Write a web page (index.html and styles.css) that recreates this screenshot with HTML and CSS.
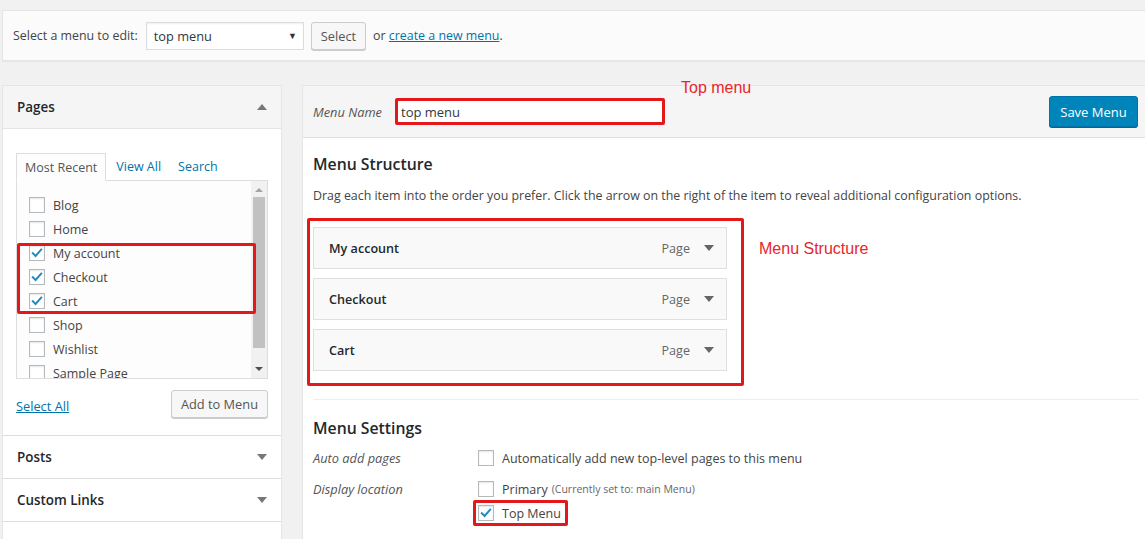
FILE: index.html
```html
<!DOCTYPE html>
<html>
<head>
<meta charset="utf-8">
<link rel="stylesheet" href="styles.css">
</head>
<body>
<div class="wrap">
  <div class="manage-bar">
    <span class="lbl">Select a menu to edit:</span>
    <div class="select"><span>top menu</span><span class="sel-arrow">▼</span></div>
    <button class="btn">Select</button>
    <span class="or">or <a href="#">create a new menu</a>.</span>
  </div>

  <div class="columns">
    <div class="left">
      <div class="acc-head open"><span>Pages</span><span class="tri up"></span></div>
      <div class="acc-body">
        <div class="tabs">
          <span class="tab active">Most Recent</span>
          <span class="tab link">View All</span>
          <span class="tab link">Search</span>
        </div>
        <div class="panel">
          <ul class="checklist">
            <li><span class="cb"></span>Blog</li>
            <li><span class="cb"></span>Home</li>
            <li><span class="cb checked"><svg viewBox="0 0 16 16"><path d="M3.2 8.2 L6.4 11.4 L12.8 4.2" /></svg></span>My account</li>
            <li><span class="cb checked"><svg viewBox="0 0 16 16"><path d="M3.2 8.2 L6.4 11.4 L12.8 4.2" /></svg></span>Checkout</li>
            <li><span class="cb checked"><svg viewBox="0 0 16 16"><path d="M3.2 8.2 L6.4 11.4 L12.8 4.2" /></svg></span>Cart</li>
            <li><span class="cb"></span>Shop</li>
            <li><span class="cb"></span>Wishlist</li>
            <li class="last"><span class="cb"></span>Sample Page</li>
          </ul>
          <div class="scrollbar">
            <span class="sb-up"></span>
            <span class="sb-thumb"></span>
            <span class="sb-down"></span>
          </div>
          <div class="redbox rb-pages"></div>
        </div>
        <div class="acc-actions">
          <a href="#" class="selall">Select All</a>
          <button class="btn">Add to Menu</button>
        </div>
      </div>
      <div class="acc-head"><span>Posts</span><span class="tri down"></span></div>
      <div class="acc-head"><span>Custom Links</span><span class="tri down"></span></div>
      <div class="acc-rest"></div>
    </div>

    <div class="right">
      <div class="menu-head">
        <label class="mname">Menu Name</label>
        <div class="name-input">top menu</div>
        <span class="note note-top">Top menu</span>
        <button class="btn-primary">Save Menu</button>
      </div>
      <div class="menu-body">
        <h3>Menu Structure</h3>
        <p class="desc">Drag each item into the order you prefer. Click the arrow on the right of the item to reveal additional configuration options.</p>
        <div class="struct-wrap">
          <div class="struct">
            <div class="item"><span class="ititle">My account</span><span class="itype">Page</span><span class="tri down dark"></span></div>
            <div class="item"><span class="ititle">Checkout</span><span class="itype">Page</span><span class="tri down dark"></span></div>
            <div class="item"><span class="ititle">Cart</span><span class="itype">Page</span><span class="tri down dark"></span></div>
          </div>
          <span class="note note-struct">Menu Structure</span>
        </div>
        <div class="settings">
          <h3>Menu Settings</h3>
          <div class="srow">
            <span class="slabel">Auto add pages</span>
            <div class="sopts">
              <div class="opt"><span class="cb"></span>Automatically add new top-level pages to this menu</div>
            </div>
          </div>
          <div class="srow">
            <span class="slabel">Display location</span>
            <div class="sopts">
              <div class="opt"><span class="cb"></span>Primary <small>(Currently set to: main Menu)</small></div>
              <div class="opt boxed"><span class="cb checked"><svg viewBox="0 0 16 16"><path d="M3.2 8.2 L6.4 11.4 L12.8 4.2" /></svg></span>Top Menu</div>
            </div>
          </div>
        </div>
      </div>
    </div>
  </div>
</div>
</body>
</html>
```

FILE: styles.css
```css
* { box-sizing: border-box; }
html, body { margin: 0; padding: 0; }
body {
  background: #f1f1f1;
  font-family: "Open Sans", "Noto Sans", sans-serif;
  font-size: 12.4px;
  color: #444;
  overflow: hidden;
  width: 1145px;
  height: 539px;
}
a { color: #0073aa; text-decoration: underline; }
.wrap { padding: 10px 0 0 2px; width: 1180px; }

.manage-bar {
  height: 51px;
  background: #fbfbfb;
  border: 1px solid #e5e5e5;
  display: flex;
  align-items: center;
  padding: 0 0 0 10px;
  box-shadow: 0 1px 1px rgba(0,0,0,0.04);
}
.lbl { margin-right: 8px; }
.select {
  width: 158px; height: 28px;
  border: 1px solid #ddd; background: #fff;
  display: flex; align-items: center; justify-content: space-between;
  padding: 0 6px 0 7px;
  color: #32373c; font-size: 12.8px;
  box-shadow: inset 0 1px 2px rgba(0,0,0,0.07);
}
.sel-arrow { font-size: 9px; color: #333; }
.btn {
  height: 28px; padding: 0 9px;
  border: 1px solid #ccc; border-radius: 3px;
  background: #f7f7f7; color: #555;
  font-family: inherit; font-size: 12.8px;
  box-shadow: 0 1px 0 #ccc;
  margin-left: 7px;
}
.or { margin-left: 7px; }

.columns { display: flex; margin-top: 24px; align-items: flex-start; gap: 20px; }
.left {
  width: 280px; flex: none;
  border: 1px solid #e5e5e5; border-bottom: none;
  background: #fff;
}
.acc-head {
  height: 43px;
  display: flex; align-items: center; justify-content: space-between;
  padding: 0 14px 0 14px;
  font-size: 13.4px; font-weight: 600; color: #23282d;
  border-bottom: 1px solid #ddd;
  background: #fff;
}
.acc-head.open { background: #f5f5f5; height: 43px; border-bottom-color: #e5e5e5; }
.tri { width: 0; height: 0; border-left: 5px solid transparent; border-right: 5px solid transparent; }
.tri.up { border-bottom: 6px solid #777; }
.tri.down { border-top: 6px solid #777; }
.tri.dark { border-top-color: #666; }

.acc-body { padding: 24px 13px 17px 13px; border-bottom: 1px solid #ddd; }
.tabs { display: flex; align-items: flex-end; height: 27px; position: relative; z-index: 1; }
.tab { font-size: 12.5px; height: 27px; display: flex; align-items: center; padding: 0 8px; }
.tab.active { border: 1px solid #ddd; border-bottom-color: #fdfdfd; background: #fdfdfd; color: #555; height: 28px; margin-bottom: -1px; padding: 0 8px; }
.tab.link { color: #0073aa; padding: 0 0 0 10px; margin-right: 7px; }
.panel {
  position: relative;
  height: 199px;
  border: 1px solid #ddd; background: #fdfdfd;
  overflow: hidden;
}
.checklist { list-style: none; margin: 0; padding: 12px 0 0 12px; }
.checklist li { height: 24px; display: flex; align-items: center; font-size: 12.5px; color: #444; }
.checklist li.last { align-items: flex-start; padding-top: 4px; height: 18px; overflow: hidden; }
.cb {
  width: 16px; height: 16px; flex: none;
  border: 1px solid #b4b9be; background: #fff;
  box-shadow: inset 0 1px 2px rgba(0,0,0,0.1);
  margin-right: 8px;
  display: inline-flex; align-items: center; justify-content: center;
}
.cb svg { width: 16px; height: 16px; }
.cb svg path { fill: none; stroke: #1e8cbe; stroke-width: 2.2; stroke-linecap: square; }
.scrollbar {
  position: absolute; right: 0; top: 0; bottom: 0; width: 16px;
  background: #f1f1f1;
  display: flex; flex-direction: column; align-items: center;
}
.sb-up { margin-top: 7px; width: 0; height: 0; border-left: 4px solid transparent; border-right: 4px solid transparent; border-bottom: 4px solid #a3a3a3; }
.sb-thumb { margin-top: 5px; width: 12px; height: 151px; background: #c1c1c1; }
.sb-down { margin-top: 19px; width: 0; height: 0; border-left: 4px solid transparent; border-right: 4px solid transparent; border-top: 4px solid #505050; }
.redbox { position: absolute; border: 3px solid #e2181b; border-radius: 2px; }
.rb-pages { left: 0; top: 62px; width: 239px; height: 71px; }

.acc-actions { display: flex; justify-content: space-between; align-items: center; margin-top: 11px; }
.selall { font-size: 12.8px; margin-top: 4px; }
.acc-actions .btn { height: 28px; padding: 0 9px; }
.acc-rest { height: 30px; }

.right { flex: 1; border: 1px solid #e5e5e5; background: #fff; height: 480px; }
.menu-head {
  height: 52px; background: #f5f5f5; border-bottom: 1px solid #dfdfdf;
  display: flex; align-items: center; padding: 0 0 0 10px; position: relative;
}
.mname { font-style: italic; color: #555; font-size: 12.8px; width: 82px; }
.name-input {
  width: 270px; height: 27px; border: 3px solid #e2181b; border-radius: 2px;
  background: #fff; font-size: 13px; color: #32373c; padding: 0 3px; display: flex; align-items: center;
}
.note { font-family: "Liberation Sans", Arial, sans-serif; color: #e8262b; font-size: 16px; }
.note-top { position: absolute; left: 378px; top: -7px; }
.btn-primary {
  margin-left: auto; margin-right: 41px;
  height: 31px; width: 89px;
  background: #0085ba; border: 1px solid #0073aa; border-radius: 3px;
  box-shadow: 0 1px 0 #006799;
  color: #fff; font-family: inherit; font-size: 13px;
}
.menu-body { padding: 0 0 0 10px; }
h3 { margin: 0; font-size: 15.8px; font-weight: 600; color: #23282d; }
.menu-body > h3 { padding-top: 15px; height: 43px; }
.desc { margin: 0; height: 37px; padding-top: 6px; }
.struct-wrap { position: relative; height: 182px; border-bottom: 1px solid #eee; margin-right: 40px; }
.struct {
  position: absolute; left: -6px; top: 0; width: 437px; height: 168px;
  border: 3px solid #e2181b; border-radius: 2px;
  padding: 6px 0 0 3px;
}
.item {
  width: 414px; height: 42px; border: 1px solid #dfdfdf; background: #f9f9f9;
  display: flex; align-items: center; padding: 0 12px 0 15px; margin-bottom: 9px;
}
.ititle { font-size: 12.6px; font-weight: 600; color: #23282d; flex: 1; }
.itype { color: #666; font-size: 12.6px; margin-right: 14px; }
.note-struct { position: absolute; left: 446px; top: 22px; }
.settings h3 { padding-top: 17px; height: 46px; }
.srow { display: flex; }
.slabel { width: 165px; font-style: italic; color: #555; font-size: 12.8px; line-height: 24px; }
.sopts { display: flex; flex-direction: column; }
.opt { display: flex; align-items: center; height: 24px; font-size: 12.5px; }
.srow + .srow { margin-top: 7px; }
.opt .cb { margin-right: 8px; }
.opt small { font-size: 10.5px; color: #666; margin-left: 4px; }
.opt.boxed { border: 3px solid #e2181b; border-radius: 2px; margin-left: -5px; padding-left: 2px; width: 95px; height: 26px; margin-top: -1px; }
```
